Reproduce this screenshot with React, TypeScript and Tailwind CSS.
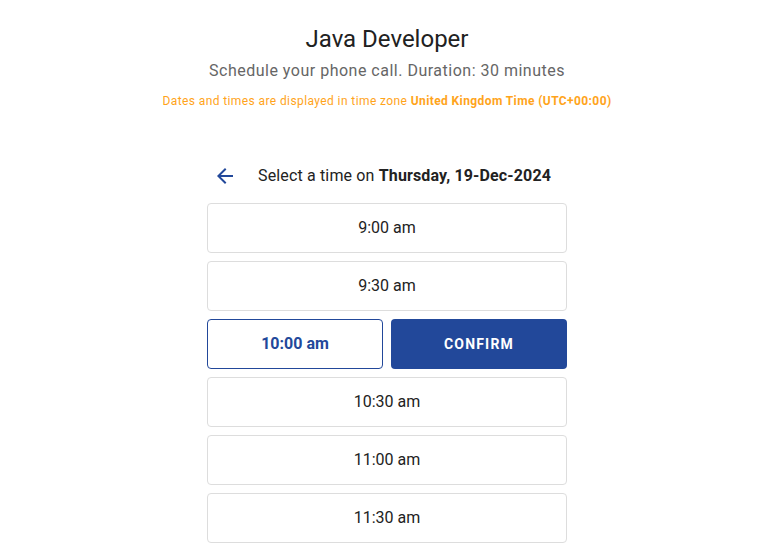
const slots = ["9:00 am", "9:30 am", "10:00 am", "10:30 am", "11:00 am", "11:30 am"];
const selected = "10:00 am";

function BackArrow() {
  return (
    <svg viewBox="0 0 24 24" className="h-6 w-6 fill-[#22489a]" aria-hidden="true">
      <path d="M20 11H7.83l5.59-5.59L12 4l-8 8 8 8 1.41-1.41L7.83 13H20v-2z" />
    </svg>
  );
}

export default function App() {
  return (
    <div className="min-h-screen bg-white pl-1 font-['Roboto','Liberation_Sans',sans-serif] text-[#212121]">
      <div className="flex flex-col items-center pt-[23px]">
        <h1 className="text-2xl leading-8">Java Developer</h1>
        <p className="mt-[4px] text-base leading-6 tracking-[0.5px] text-[#666666]">
          Schedule your phone call. Duration: 30 minutes
        </p>
        <p className="mt-[10px] text-xs leading-4 tracking-[0.4px] text-[#ffa41b]">
          Dates and times are displayed in time zone <span className="font-bold">United Kingdom Time (UTC+00:00)</span>
        </p>

        <div className="mt-[55px] flex w-[360px] flex-col">
          <div className="flex items-center pl-[6px]">
            <button className="flex">
              <BackArrow />
            </button>
            <span className="ml-[21px] text-base leading-6 tracking-[0.15px] text-[#222]">
              Select a time on <span className="font-bold">Thursday, 19-Dec-2024</span>
            </span>
          </div>

          <div className="mt-[15px] flex flex-col gap-2">
            {slots.map((slot) =>
              slot === selected ? (
                <div key={slot} className="grid grid-cols-2 gap-2">
                  <button className="flex h-[50px] items-center justify-center rounded border border-[#22489a] text-base font-bold text-[#22489a]">
                    {slot}
                  </button>
                  <button className="flex h-[50px] items-center justify-center rounded bg-[#22489a] text-sm font-bold tracking-[1.2px] text-white">
                    CONFIRM
                  </button>
                </div>
              ) : (
                <button
                  key={slot}
                  className="flex h-[50px] items-center justify-center rounded border border-[#dddddd] text-base text-[#222]"
                >
                  {slot}
                </button>
              )
            )}
          </div>
        </div>
      </div>
    </div>
  );
}
